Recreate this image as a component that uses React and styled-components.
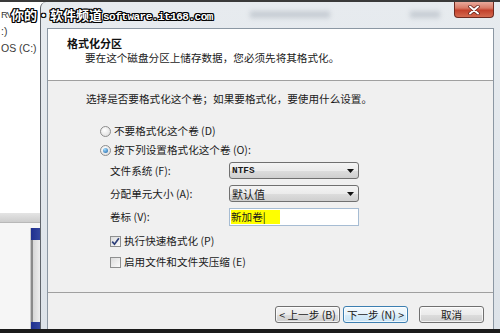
import React from "react";
import styled, { createGlobalStyle } from "styled-components";

const GlobalStyle = createGlobalStyle`
  html, body { margin: 0; padding: 0; overflow: hidden; }
  body {
    font-family: "Noto Sans CJK SC", "Noto Sans", sans-serif;
    color: #1a1a1a;
  }
`;

const CJK = `"Noto Sans CJK SC", "Noto Sans", sans-serif`;

export default function App() {
  return (
    <>
      <GlobalStyle />
      <Screen>
        <Backdrop>
          <ExplorerPane>
            <DriveItem $tight>RV</DriveItem>
            <DriveItem>:)</DriveItem>
            <DriveItem>OS (C:)</DriveItem>
          </ExplorerPane>
          <Splitter />
          <LowerPane>
            <LowerBlank />
            <SideStrip>
              <BlueBlock $h={12} />
              <GreyColumn />
              <BlueBlock $h={7} />
            </SideStrip>
          </LowerPane>
        </Backdrop>

        <Window>
          <TitleBar>
            <Blur $w={80} $ml={203} />
            <Blur $w={30} $ml={80} />
            <CloseButton>
              <svg width="12" height="10" viewBox="0 0 12 10">
                <path d="M2 1.5 L10 8.5 M10 1.5 L2 8.5" stroke="#5a1a12" strokeWidth="3.4" strokeLinecap="round" />
                <path d="M2 1.5 L10 8.5 M10 1.5 L2 8.5" stroke="#fff" strokeWidth="2" strokeLinecap="round" />
              </svg>
            </CloseButton>
          </TitleBar>

          <Content>
            <Header>
              <Title>格式化分区</Title>
              <Subtitle>要在这个磁盘分区上储存数据，您必须先将其格式化。</Subtitle>
            </Header>

            <Body>
              <Prompt>选择是否要格式化这个卷；如果要格式化，要使用什么设置。</Prompt>
              <Options>
                <OptionRow>
                  <Radio />
                  <span>不要格式化这个卷 (D)</span>
                </OptionRow>
                <OptionRow>
                  <Radio $checked />
                  <span>按下列设置格式化这个卷 (O):</span>
                </OptionRow>
              </Options>

              <Form>
                <Label>文件系统 (F):</Label>
                <Combo>
                  <ComboText $mono>NTFS</ComboText>
                  <Arrow />
                </Combo>
                <Label>分配单元大小 (A):</Label>
                <Combo>
                  <ComboText>默认值</ComboText>
                  <Arrow />
                </Combo>
                <Label>卷标 (V):</Label>
                <TextBox>
                  <Highlight>新加卷|</Highlight>
                </TextBox>
              </Form>

              <Checks>
                <OptionRow>
                  <CheckBox>
                    <svg width="9" height="9" viewBox="0 0 9 9">
                      <path d="M1.2 4.6 L3.5 7.2 L7.9 1.2" fill="none" stroke="#2d3f7a" strokeWidth="1.7" />
                    </svg>
                  </CheckBox>
                  <span>执行快速格式化 (P)</span>
                </OptionRow>
                <OptionRow>
                  <CheckBox />
                  <span>启用文件和文件夹压缩 (E)</span>
                </OptionRow>
              </Checks>
            </Body>

            <Footer>
              <Button>&lt; 上一步 (B)</Button>
              <Button $focused $ml={3}>下一步 (N) &gt;</Button>
              <Button $ml={11}>取消</Button>
            </Footer>
          </Content>
        </Window>

        <Watermark>
          你的•软件频道<Domain>software.it168.com</Domain>
        </Watermark>
      </Screen>
    </>
  );
}

function Arrow() {
  return (
    <ArrowWrap>
      <svg width="7" height="4" viewBox="0 0 7 4">
        <path d="M0 0 L7 0 L3.5 4 Z" fill="#111" />
      </svg>
    </ArrowWrap>
  );
}

const Screen = styled.div`
  position: relative;
  width: 500px;
  height: 333px;
  box-sizing: border-box;
  border-top: 2px solid #3a3a3a;
  border-bottom: 4px solid #1b1b1b;
  display: flex;
  overflow: hidden;
  background: #fff;
`;

const Backdrop = styled.div`
  width: 40px;
  display: flex;
  flex-direction: column;
  overflow: hidden;
`;

const ExplorerPane = styled.div`
  height: 211px;
  background: #fff;
  padding-top: 6px;
  box-sizing: border-box;
  display: flex;
  flex-direction: column;
  gap: 4px;
`;

const DriveItem = styled.div`
  font-family: "Liberation Sans", Arial, sans-serif;
  font-size: ${(p) => (p.$tight ? "9.5px" : "10.5px")};
  letter-spacing: ${(p) => (p.$tight ? "-1px" : "0")};
  line-height: 13px;
  color: #3a3a3a;
  white-space: nowrap;
  padding-left: 1px;
`;

const Splitter = styled.div`
  height: 9px;
  background: linear-gradient(#e4e4e4, #cdcdcd);
  border-bottom: 1px solid #b8b8b8;
`;

const LowerPane = styled.div`
  flex: 1;
  display: flex;
  padding-top: 5px;
  background: #f6f6f6;
`;

const LowerBlank = styled.div`
  flex: 1;
  border-right: 1px solid #c9c9c9;
`;

const SideStrip = styled.div`
  width: 9px;
  display: flex;
  flex-direction: column;
`;

const BlueBlock = styled.div`
  height: ${(p) => p.$h}px;
  background: linear-gradient(90deg, #1f2f8f, #34469e);
`;

const GreyColumn = styled.div`
  flex: 1;
  background: linear-gradient(90deg, #d6d6d6, #eeeeee);
  border-left: 2px solid #8a8a8a;
`;

const Window = styled.div`
  flex: 1;
  display: flex;
  flex-direction: column;
  border-left: 1px solid #5f646b;
  border-top-left-radius: 6px;
  background: linear-gradient(#e7ebef, #dde3e9);
  padding: 0 6px 0 6px;
`;

const TitleBar = styled.div`
  height: 26px;
  display: flex;
  align-items: flex-start;
`;

const Blur = styled.div`
  width: ${(p) => p.$w}px;
  height: 7px;
  margin-left: ${(p) => p.$ml}px;
  margin-top: 9px;
  background: #b9c0c8;
  filter: blur(2.5px);
  opacity: 0.7;
`;

const CloseButton = styled.div`
  margin-left: auto;
  width: 40px;
  height: 16px;
  box-sizing: border-box;
  border: 1px solid #6e2a20;
  border-top: none;
  border-radius: 0 0 4px 4px;
  background: linear-gradient(#e9aa9c 0%, #d87a66 40%, #c3412c 55%, #d46a50 100%);
  display: flex;
  align-items: center;
  justify-content: center;
`;

const Content = styled.div`
  flex: 1;
  display: flex;
  flex-direction: column;
  border: 1px solid #8b97a3;
  border-bottom: none;
  background: #f0f0f0;
  font-family: ${CJK};
  font-size: 10.6px;
`;

const Header = styled.div`
  height: 52px;
  box-sizing: border-box;
  background: #fff;
  border-bottom: 1px solid #a0a0a0;
  padding: 8px 0 0 19px;
`;

const Title = styled.div`
  font-size: 11px;
  font-weight: 700;
  line-height: 13px;
  color: #111;
`;

const Subtitle = styled.div`
  padding-left: 18px;
  margin-top: 1px;
  line-height: 13px;
  white-space: nowrap;
`;

const Body = styled.div`
  height: 212px;
  box-sizing: border-box;
  border-bottom: 1px solid #a0a0a0;
  padding: 11px 0 0 38px;
  display: flex;
  flex-direction: column;
`;

const Prompt = styled.div`
  line-height: 14px;
  white-space: nowrap;
`;

const Options = styled.div`
  margin-top: 18px;
  padding-left: 14px;
  display: flex;
  flex-direction: column;
  gap: 5px;
`;

const OptionRow = styled.div`
  height: 14px;
  display: flex;
  align-items: center;
  gap: 3px;
  white-space: nowrap;
  line-height: 14px;
`;

const Radio = styled.div`
  width: 11px;
  height: 11px;
  box-sizing: border-box;
  border-radius: 50%;
  border: 1px solid #8d8d8d;
  background: radial-gradient(circle at 40% 35%, #ffffff, #d8d8d8);
  display: flex;
  align-items: center;
  justify-content: center;
  &::after {
    content: "";
    display: ${(p) => (p.$checked ? "block" : "none")};
    width: 5px;
    height: 5px;
    border-radius: 50%;
    background: radial-gradient(circle at 35% 30%, #9fdcff, #1b5fa3);
  }
`;

const Form = styled.div`
  margin-top: 5px;
  padding-left: 24px;
  display: grid;
  grid-template-columns: 119px 130px;
  row-gap: 6px;
  align-items: center;
`;

const Label = styled.div`
  white-space: nowrap;
  line-height: 14px;
`;

const Combo = styled.div`
  height: 17px;
  box-sizing: border-box;
  border: 1px solid #707070;
  border-radius: 3px;
  background: linear-gradient(#f4f4f4 0%, #ebebeb 50%, #dddddd 51%, #cfcfcf 100%);
  display: flex;
  align-items: center;
  padding: 0 4px 0 2px;
`;

const ComboText = styled.span`
  flex: 1;
  font-family: ${(p) => (p.$mono ? `"Liberation Mono", monospace` : CJK)};
  font-weight: ${(p) => (p.$mono ? 700 : 400)};
  font-size: ${(p) => (p.$mono ? "9.4px" : "11px")};
  line-height: 14px;
`;

const ArrowWrap = styled.span`
  display: flex;
  align-items: center;
`;

const TextBox = styled.div`
  height: 18px;
  box-sizing: border-box;
  border: 1px solid #a6bcd3;
  background: #fff;
  display: flex;
  align-items: center;
  padding-left: 1px;
`;

const Highlight = styled.span`
  width: 49px;
  height: 14px;
  background: #ffff00;
  line-height: 14px;
  font-size: 10.6px;
  white-space: nowrap;
`;

const Checks = styled.div`
  margin-top: 8px;
  padding-left: 24px;
  display: flex;
  flex-direction: column;
  gap: 7px;
`;

const CheckBox = styled.div`
  width: 11px;
  height: 11px;
  box-sizing: border-box;
  border: 1px solid #8e8f8f;
  background: linear-gradient(135deg, #dcdcdc, #fbfbfb);
  display: flex;
  align-items: center;
  justify-content: center;
`;

const Footer = styled.div`
  flex: 1;
  display: flex;
  justify-content: flex-end;
  align-items: flex-start;
  padding: 13px 9px 0 0;
`;

const Button = styled.div`
  width: 65px;
  height: 17px;
  box-sizing: border-box;
  margin-left: ${(p) => p.$ml || 0}px;
  border: 1px solid ${(p) => (p.$focused ? "#3c7fb1" : "#707070")};
  border-radius: 3px;
  background: ${(p) =>
    p.$focused
      ? "linear-gradient(#f4fafd 0%, #e6f3fb 50%, #d7ecf8 51%, #c8e4f6 100%)"
      : "linear-gradient(#f4f4f4 0%, #ebebeb 50%, #dddddd 51%, #cfcfcf 100%)"};
  box-shadow: inset 0 0 0 1px rgba(255, 255, 255, 0.7);
  display: flex;
  align-items: center;
  justify-content: center;
  white-space: nowrap;
  font-size: 10.6px;
  line-height: 14px;
`;

const Watermark = styled.div`
  position: absolute;
  top: 5px;
  left: 11px;
  display: flex;
  align-items: baseline;
  font-family: ${CJK};
  font-size: 13px;
  font-weight: 700;
  line-height: 16px;
  color: #fff;
  white-space: nowrap;
  text-shadow: 1px 0 #000, -1px 0 #000, 0 1px #000, 0 -1px #000,
    1px 1px #000, -1px -1px #000, 1px -1px #000, -1px 1px #000;
`;

const Domain = styled.span`
  font-family: "Liberation Mono", monospace;
  font-size: 11px;
  letter-spacing: -0.5px;
  margin-left: 1px;
`;
